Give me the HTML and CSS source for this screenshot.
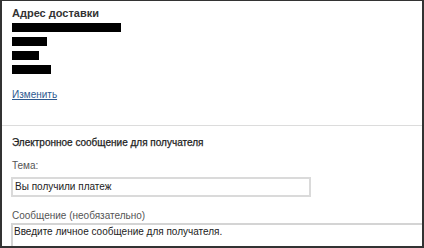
FILE: index.html
```html
<!DOCTYPE html>
<html lang="ru">
<head>
<meta charset="utf-8">
<link rel="stylesheet" href="styles.css">
</head>
<body>
<div class="frame">
  <section class="address">
    <h3 class="title">Адрес доставки</h3>
    <div class="redacted">
      <span class="bar" style="width:109px"></span>
      <span class="bar" style="width:35px"></span>
      <span class="bar" style="width:27px"></span>
      <span class="bar" style="width:39px"></span>
    </div>
    <a class="change" href="#">Изменить</a>
  </section>
  <section class="email">
    <h3 class="subtitle">Электронное сообщение для получателя</h3>
    <label class="label">Тема:</label>
    <div class="input">Вы получили платеж</div>
    <label class="label label-msg">Сообщение (необязательно)</label>
    <div class="textarea">Введите личное сообщение для получателя.</div>
  </section>
</div>
</body>
</html>
```
FILE: styles.css
```css
* { box-sizing: border-box; }
html, body { margin: 0; padding: 0; background: #fff; }
body { font-family: "Liberation Sans", Arial, sans-serif; font-size: 10px; line-height: 13px; color: #333; }
.frame {
  width: 424px;
  height: 248px;
  border-top: 1px solid #333;
  border-left: 2px solid #333;
  border-right: 2px solid #333;
  border-bottom: 2px solid #333;
  overflow: hidden;
}
.address {
  height: 125px;
  padding: 6px 0 0 10px;
  border-bottom: 1px solid #dcdcdc;
  display: flex;
  flex-direction: column;
  align-items: flex-start;
}
.title { margin: 0; font-size: 11px; font-weight: bold; color: #333; line-height: 13px; }
.redacted { display: flex; flex-direction: column; gap: 5px; margin-top: 3px; }
.bar { display: block; height: 9px; background: #000; }
.change { margin-top: 14px; color: #2f5a8f; text-decoration: underline; }
.email { padding: 10px 0 0 10px; display: flex; flex-direction: column; align-items: flex-start; }
.subtitle { margin: 0; font-size: 10px; font-weight: normal; color: #222; line-height: 13px; -webkit-text-stroke: 0.25px #222; }
.label { display: block; color: #555; margin-top: 10px; }
.input {
  margin-top: 5px;
  margin-left: -1px;
  width: 300px;
  height: 20px;
  border: 2px solid #dadada;
  padding: 0 0 0 2px;
  line-height: 16px;
  color: #222;
}
.label-msg { margin-top: 12px; }
.textarea {
  margin-top: 1px;
  margin-left: -1px;
  width: 430px;
  height: 40px;
  border: 2px solid #d4d4d4;
  border-right: none;
  padding: 0 0 0 1px;
  line-height: 14px;
  color: #222;
}
```
